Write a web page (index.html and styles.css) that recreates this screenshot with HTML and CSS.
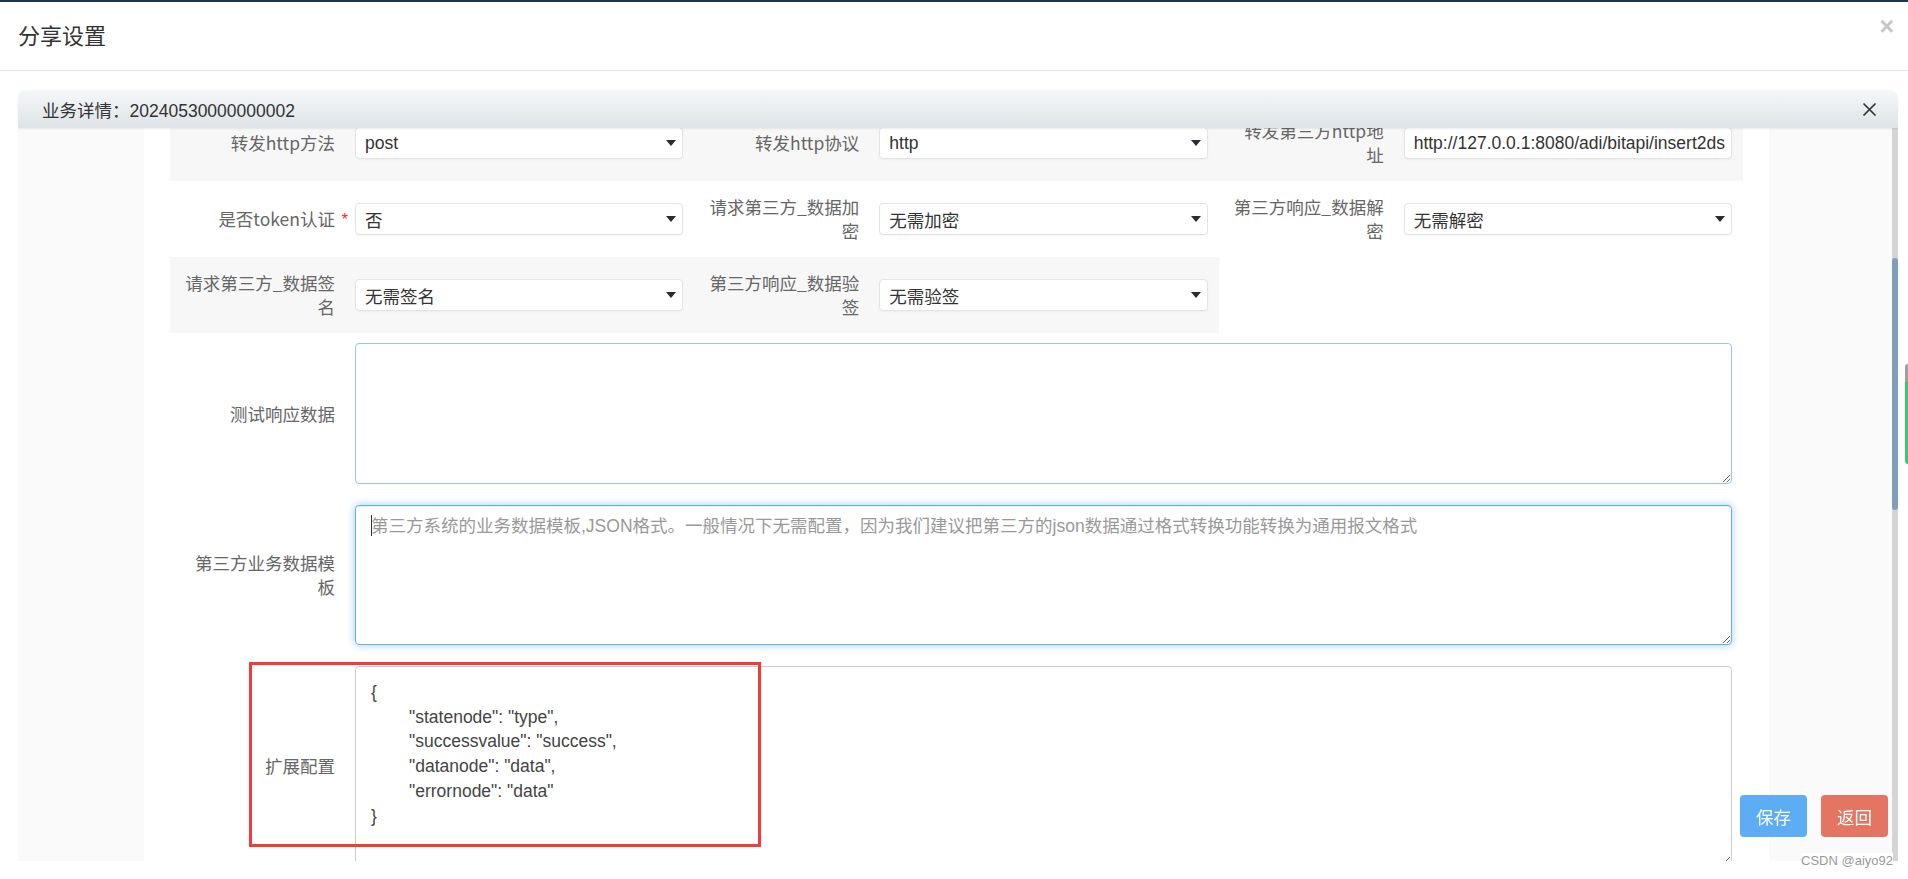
FILE: index.html
```html
<!DOCTYPE html>
<html lang="zh-CN">
<head>
  <meta charset="UTF-8" />
  <meta name="viewport" content="width=device-width, initial-scale=1.0"/>
  <title>分享设置</title>
  <link rel="stylesheet" href="styles.css">
</head>
<body>

  <div class="modal">
    <!-- Header -->
    <div class="modal-header">
      <h4 class="modal-title">分享设置</h4>
      <span class="close">&times;</span>
    </div>

    <div class="modal-body">
      <div class="panel">
        <div class="panel-title">
          <span>业务详情：20240530000000002</span>
          <svg class="panel-close" width="15" height="15" viewBox="0 0 15 15">
            <path d="M1.5 1.5 L13.5 13.5 M13.5 1.5 L1.5 13.5" stroke="#333" stroke-width="1.7" fill="none"/>
          </svg>
        </div>

        <div class="panel-body">
          <div class="panel-scroll">
            <div class="sheet">
              <div class="form">

                <div class="grid-row">
                  <div class="cell shade">
                    <label>转发http方法</label>
                    <div class="select"><span>post</span><i class="caret"></i></div>
                  </div>
                  <div class="cell shade">
                    <label>转发http协议</label>
                    <div class="select"><span>http</span><i class="caret"></i></div>
                  </div>
                  <div class="cell shade">
                    <label>转发第三方http地址</label>
                    <div class="input">http://127.0.0.1:8080/adi/bitapi/insert2ds</div>
                  </div>
                </div>

                <div class="grid-row">
                  <div class="cell">
                    <label>是否token认证<span class="req">*</span></label>
                    <div class="select"><span>否</span><i class="caret"></i></div>
                  </div>
                  <div class="cell">
                    <label>请求第三方_数据加密</label>
                    <div class="select"><span>无需加密</span><i class="caret"></i></div>
                  </div>
                  <div class="cell">
                    <label>第三方响应_数据解密</label>
                    <div class="select"><span>无需解密</span><i class="caret"></i></div>
                  </div>
                </div>

                <div class="grid-row">
                  <div class="cell shade">
                    <label>请求第三方_数据签名</label>
                    <div class="select"><span>无需签名</span><i class="caret"></i></div>
                  </div>
                  <div class="cell shade">
                    <label>第三方响应_数据验签</label>
                    <div class="select"><span>无需验签</span><i class="caret"></i></div>
                  </div>
                </div>

                <div class="text-row">
                  <label>测试响应数据</label>
                  <textarea class="ta hover"></textarea>
                </div>

                <div class="text-row">
                  <label>第三方业务数据模板</label>
                  <div class="ta-wrap">
                    <textarea class="ta focus" placeholder="第三方系统的业务数据模板,JSON格式。一般情况下无需配置，因为我们建议把第三方的json数据通过格式转换功能转换为通用报文格式"></textarea>
                    <span class="text-caret"></span>
                  </div>
                </div>

                <div class="text-row">
                  <label>扩展配置</label>
                  <textarea class="ta code">{
&#9;"statenode": "type",
&#9;"successvalue": "success",
&#9;"datanode": "data",
&#9;"errornode": "data"
}</textarea>
                </div>

              </div>
            </div>
          </div>
          <div class="scrollbar"><div class="thumb"></div></div>
        </div>
      </div>
    </div>

    <div class="float-actions">
      <button class="btn save">保存</button>
      <button class="btn back">返回</button>
    </div>
  </div>

  <!-- annotation -->
  <div class="mark-box"></div>
  <div class="side-tab"></div>
  <div class="watermark">CSDN @aiyo92</div>

</body>
</html>
```

FILE: styles.css
```css
* {
  box-sizing: border-box;
}

html, body {
  margin: 0;
  height: 100%;
}

body {
  font-family: "Liberation Sans", "Noto Sans CJK SC", sans-serif;
  font-size: 17.5px;
  color: #333;
  background: #fff;
  overflow: hidden;
}

.modal {
  height: 879px;
  border-top: 2px solid #1c3652;
}

.modal-header {
  height: 69px;
  display: flex;
  align-items: center;
  justify-content: space-between;
  padding: 0 14px 4px 18px;
  border-bottom: 1px solid #e5e5e5;
}

.modal-title {
  margin: 0;
  font-size: 22px;
  font-weight: normal;
  color: #333;
}

.close {
  align-self: flex-start;
  margin-top: 12px;
  font-size: 25px;
  font-weight: bold;
  line-height: 1;
  color: #c6c6c6;
}

.modal-body {
  padding: 19px 10px 0 18px;
}

.panel-title {
  height: 38px;
  display: flex;
  align-items: center;
  justify-content: space-between;
  padding: 0 21px 0 24px;
  background: linear-gradient(#f5f8fa, #dde3e7);
  border-radius: 8px 8px 0 0;
  box-shadow: 0 1px 2px rgba(0,0,0,0.08);
  position: relative;
  z-index: 2;
}

.panel-body {
  display: flex;
  height: 733px;
}

.panel-scroll {
  flex: 1;
  background: #fafafa;
  padding: 0 123px 0 126px;
  overflow: hidden;
}

.sheet {
  height: 100%;
  background: #fff;
  padding: 0 26px;
  overflow: hidden;
}

.form {
  margin-top: -23px;
}

.scrollbar {
  width: 6px;
  background: #d5d5d5;
}

.scrollbar .thumb {
  margin-top: 130px;
  height: 252px;
  background: #7f9fba;
  border-radius: 3px;
}

/* select rows */
.grid-row {
  display: grid;
  grid-template-columns: repeat(3, 1fr);
}

.cell {
  display: grid;
  grid-template-columns: 185px 1fr;
  align-items: center;
  height: 76px;
  padding-right: 11px;
}

.cell.shade {
  background: #f7f7f7;
}

label {
  position: relative;
  padding: 0 20px 0 13px;
  text-align: right;
  font-family: "Noto Sans CJK SC", "Liberation Sans", sans-serif;
  line-height: 24px;
  color: #666;
}

.req {
  position: absolute;
  right: 7px;
  top: 1px;
  color: #f22;
  font-family: "Liberation Sans", sans-serif;
  font-size: 16px;
}

.select,
.input {
  height: 32px;
  display: flex;
  align-items: center;
  justify-content: space-between;
  padding: 0 6px 0 9px;
  background: #fff;
  border: 1px solid #e4e4e4;
  border-radius: 4px;
  box-shadow: 0 1px 2px rgba(0,0,0,0.04);
  color: #333;
  white-space: nowrap;
  overflow: hidden;
}

.input {
  padding-right: 2px;
  justify-content: flex-start;
}

.caret {
  width: 0;
  height: 0;
  border-left: 5px solid transparent;
  border-right: 5px solid transparent;
  border-top: 6px solid #2b2b38;
}

/* textarea rows */
.text-row {
  display: grid;
  grid-template-columns: 185px 1fr;
  align-items: center;
  padding: 10px 11px 11px 0;
}

.ta-wrap {
  position: relative;
}

.ta {
  display: block;
  width: 100%;
  height: 141px;
  padding: 8px 15px;
  font: inherit;
  line-height: 24px;
  color: #444;
  background: #fff;
  border: 1px solid #ccc;
  border-radius: 4px;
  outline: none;
  resize: vertical;
}

.ta::placeholder {
  color: #999;
}

.ta.hover {
  border-color: #94c6ef;
}

.ta.focus {
  height: 140px;
  border-color: #66afe9;
  box-shadow: inset 0 1px 1px rgba(0,0,0,0.075), 0 0 8px rgba(102,175,233,0.6);
}

.text-caret {
  position: absolute;
  left: 16px;
  top: 10px;
  width: 1px;
  height: 21px;
  background: #333;
}

.ta.code {
  height: 200px;
  padding-top: 13px;
  line-height: 24.7px;
  tab-size: 38px;
  overflow: hidden;
}

/* floating buttons */
.float-actions {
  position: fixed;
  right: 20px;
  bottom: 42px;
  display: flex;
  gap: 14px;
}

.btn {
  width: 67px;
  height: 42px;
  border: none;
  border-radius: 4px;
  font-family: inherit;
  font-size: 17.5px;
  color: #fff;
  cursor: pointer;
}

.save {
  background: #5cadf4;
}

.back {
  background: #e57563;
}

.mark-box {
  position: absolute;
  left: 249px;
  top: 662px;
  width: 512px;
  height: 185px;
  border: 3px solid #f03c3c;
}

.side-tab {
  position: absolute;
  right: 0;
  top: 364px;
  width: 3px;
  height: 100px;
  border-radius: 3px 0 0 3px;
  background: linear-gradient(#a0a0a0 0 18px, #3acb6a 18px);
}

.watermark {
  position: absolute;
  right: 15px;
  top: 853px;
  font-size: 13px;
  color: #999;
  background: #fff;
}
```
